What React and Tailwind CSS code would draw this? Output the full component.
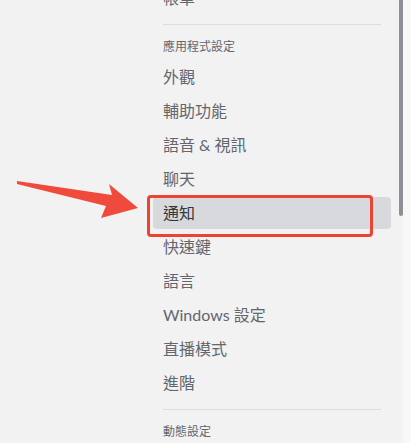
import React from "react";

const items = ["外觀", "輔助功能", "語音 & 視訊", "聊天", "通知", "快速鍵", "語言", "Windows 設定", "直播模式", "進階"];

export default function App() {
  const font = { fontFamily: 'Lato, "Noto Sans CJK TC", sans-serif' };
  return (
    <div className="relative flex h-[443px] w-[411px] overflow-hidden bg-[#f2f2f3]" style={font}>
      <div className="w-[153px] shrink-0" />
      <div className="flex w-[238px] shrink-0 flex-col">
        <div className="mt-[-18px] flex h-[32px] shrink-0 items-center px-[10px] text-[16px] leading-[20px] text-[#64666d]">帳單</div>
        <div className="mx-[10px] mt-[10px] h-px shrink-0 bg-[#dcdde0]" />
        <div className="shrink-0 px-[10px] pt-[14px] pb-[6px] text-[12px] leading-[16px] text-[#64666d]">應用程式設定</div>
        <div className="flex shrink-0 flex-col gap-[2px]">
          {items.map((t) => (
            <div
              key={t}
              className={
                t === "通知"
                  ? "flex h-[32px] shrink-0 items-center rounded-[4px] bg-[#d8d9dc] px-[10px] text-[16px] leading-[20px] text-[#34363b]"
                  : "flex h-[32px] shrink-0 items-center px-[10px] text-[16px] leading-[20px] text-[#64666d]"
              }
            >
              {t}
            </div>
          ))}
        </div>
        <div className="mx-[10px] mt-[10px] h-px shrink-0 bg-[#dcdde0]" />
        <div className="shrink-0 px-[10px] pt-[14px] pb-[6px] text-[12px] leading-[16px] text-[#64666d]">動態設定</div>
      </div>
      <div className="w-[8px] shrink-0" />
      <div className="w-[4px] shrink-0">
        <div className="h-[216px] rounded-b-full bg-[#8e8f97]" />
      </div>
      <div className="flex-1 bg-[#f8f8f8]" />

      <div className="absolute left-[147px] top-[195px] h-[42px] w-[226px] rounded-[4px] border-[3px] border-[#ec4335]" />
      <svg className="absolute left-0 top-0" width="160" height="240" viewBox="0 0 160 240">
        <polygon
          points="17,181 112,195 109,184 138,208 101,218 106,206 17,184"
          fill="#f04a3c"
        />
      </svg>
    </div>
  );
}
